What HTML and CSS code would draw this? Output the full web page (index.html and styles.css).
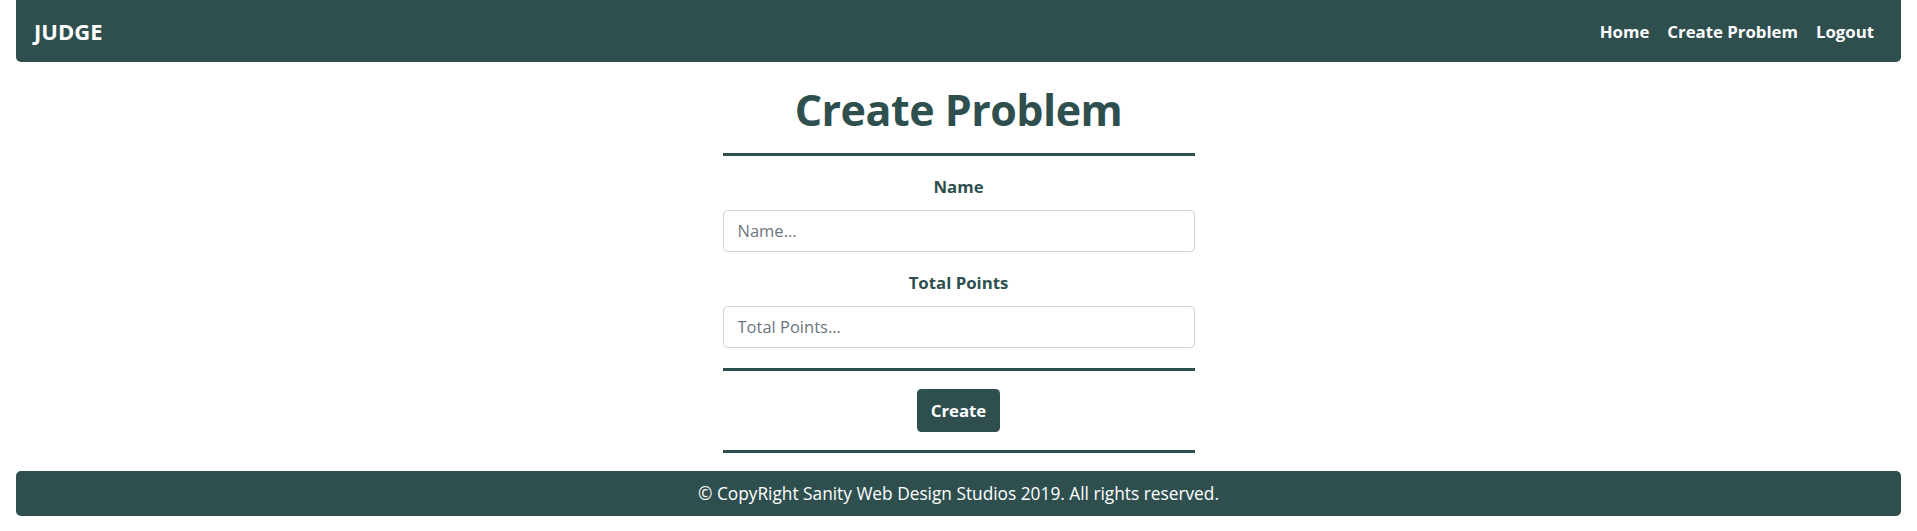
FILE: index.html
```html
<!DOCTYPE html>
<html lang="en">
<head>
<meta charset="utf-8">
<title>Create Problem - JUDGE</title>
<link rel="stylesheet" href="styles.css">
</head>
<body>
<nav class="navbar">
  <a class="brand" href="#">JUDGE</a>
  <div class="nav-links">
    <a href="#">Home</a>
    <a href="#">Create Problem</a>
    <a href="#">Logout</a>
  </div>
</nav>
<main class="content">
  <h1 class="title">Create Problem</h1>
  <div class="rule"></div>
  <form class="form">
    <label class="label label-first" for="name">Name</label>
    <input class="field" id="name" type="text" placeholder="Name...">
    <label class="label" for="points">Total Points</label>
    <input class="field" id="points" type="text" placeholder="Total Points...">
    <div class="rule rule-mid"></div>
    <button class="btn" type="button">Create</button>
    <div class="rule rule-end"></div>
  </form>
</main>
<footer class="footer">© CopyRight Sanity Web Design Studios 2019. All rights reserved.</footer>
</body>
</html>
```

FILE: styles.css
```css
* { box-sizing: border-box; }

body {
  margin: 0;
  font-family: "Open Sans", "Noto Sans", sans-serif;
  background: #ffffff;
  color: #2f4f4f;
}

.navbar {
  margin: 0 16px;
  height: 62px;
  background: #2f4f4f;
  border-radius: 0 0 5px 5px;
  display: flex;
  align-items: center;
  justify-content: space-between;
  padding: 0 27px 0 18px;
}

.brand {
  color: #ffffff;
  text-decoration: none;
  font-weight: 700;
  font-size: 22px;
  line-height: 1;
}

.nav-links {
  display: flex;
  gap: 18px;
}

.nav-links a {
  color: #ffffff;
  text-decoration: none;
  font-weight: 700;
  font-size: 16.8px;
}

.content {
  width: 472px;
  margin: 0 auto;
  display: flex;
  flex-direction: column;
}

.title {
  margin: 22px 0 17px;
  text-align: center;
  font-size: 43px;
  letter-spacing: -0.5px;
  line-height: 1.2;
  font-weight: 700;
  color: #2f4f4f;
}

.rule {
  border-top: 3px solid #2f4f4f;
  height: 0;
}

.form {
  display: flex;
  flex-direction: column;
  align-items: stretch;
}

.label {
  margin: 18px 0 11px;
  text-align: center;
  font-weight: 700;
  font-size: 16.8px;
  line-height: 1.5;
}

.label-first { margin-top: 18px; }

.field {
  height: 42px;
  width: 100%;
  border: 1px solid #ced4da;
  border-radius: 4.4px;
  padding: 0 14px;
  font-family: inherit;
  font-size: 16.5px;
  color: #495057;
  background: #ffffff;
}

.field::placeholder { color: #6c757d; }

.rule-mid { margin-top: 20px; }

.btn {
  align-self: center;
  margin-top: 18px;
  height: 43px;
  padding: 0 14px;
  border: none;
  border-radius: 4.4px;
  background: #2f4f4f;
  color: #ffffff;
  font-family: inherit;
  font-weight: 700;
  font-size: 16.8px;
}

.rule-end { margin-top: 18px; }

.footer {
  margin: 18px 16px 0;
  height: 45px;
  background: #2f4f4f;
  border-radius: 5px;
  color: #ffffff;
  font-size: 17.3px;
  display: flex;
  align-items: center;
  justify-content: center;
}
```
